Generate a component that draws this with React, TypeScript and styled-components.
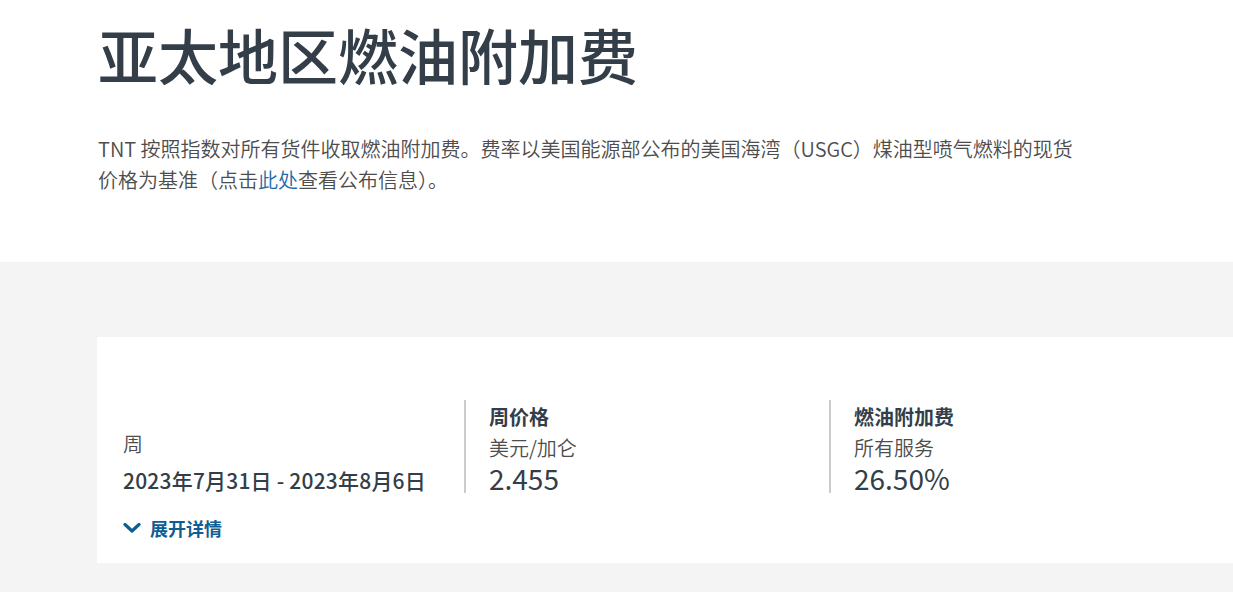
import styled, { createGlobalStyle } from 'styled-components';

const GlobalStyle = createGlobalStyle`
  html, body {
    margin: 0;
    padding: 0;
    background: #ffffff;
  }
  body {
    font-family: 'Noto Sans CJK SC', 'Noto Sans', sans-serif;
    color: #333e48;
    overflow: hidden;
  }
`;

const columns = [
  { title: '周价格', unit: '美元/加仑', value: '2.455' },
  { title: '燃油附加费', unit: '所有服务', value: '26.50%' },
];

const App = () => {
  return (
    <>
      <GlobalStyle />
      <Header>
        <Title>亚太地区燃油附加费</Title>
        <Intro>
          TNT 按照指数对所有货件收取燃油附加费。费率以美国能源部公布的美国海湾（USGC）煤油型喷气燃料的现货价格为基准（点击
          <IntroLink href="#">此处</IntroLink>查看公布信息）。
        </Intro>
      </Header>
      <GraySection>
        <Card>
          <Row>
            <WeekCol>
              <Label>周</Label>
              <DateText>2023年7月31日 - 2023年8月6日</DateText>
            </WeekCol>
            {columns.map((c) => (
              <InfoCol key={c.title}>
                <ColTitle>{c.title}</ColTitle>
                <Label>{c.unit}</Label>
                <Value>{c.value}</Value>
              </InfoCol>
            ))}
          </Row>
          <Expand>
            <svg width="18" height="12" viewBox="0 0 18 12">
              <path
                d="M2 2.5 L9 9 L16 2.5"
                fill="none"
                stroke="#0e5e93"
                strokeWidth="3.2"
                strokeLinecap="round"
                strokeLinejoin="round"
              />
            </svg>
            展开详情
          </Expand>
        </Card>
      </GraySection>
    </>
  );
};

export default App;

const Header = styled.div`
  padding: 12px 0 0 98px;
  height: 262px;
  box-sizing: border-box;
`;

const Title = styled.h1`
  margin: 0;
  font-size: 60px;
  line-height: 84px;
  font-weight: 500;
  color: #333e48;
`;

const Intro = styled.p`
  margin: 37px 0 0;
  max-width: 990px;
  font-size: 20px;
  line-height: 31px;
  font-weight: 350;
  color: #4d4d4d;
`;

const IntroLink = styled.a`
  color: #1f6aa8;
  text-decoration: none;
`;

const GraySection = styled.div`
  background: #f4f4f4;
  padding: 75px 0 29px 97px;
`;

const Card = styled.div`
  background: #ffffff;
  padding: 63px 0 24px 26px;
  height: 226px;
  box-sizing: border-box;
`;

const Row = styled.div`
  display: grid;
  grid-template-columns: 341px 365px 1fr;
  align-items: end;
`;

const WeekCol = styled.div`
  display: flex;
  flex-direction: column;
`;

const InfoCol = styled.div`
  display: flex;
  flex-direction: column;
  border-left: 2px solid #cccccc;
  padding-left: 23px;
  height: 93px;
  box-sizing: border-box;
`;

const ColTitle = styled.div`
  font-size: 20px;
  line-height: 28px;
  font-weight: 700;
  color: #333e48;
  margin-top: 3px;
`;

const Label = styled.div`
  font-size: 20px;
  line-height: 30px;
  font-weight: 350;
  color: #4d4d4d;
  margin-top: 2px;
`;

const DateText = styled.div`
  font-size: 21px;
  line-height: 30px;
  font-weight: 500;
  letter-spacing: 0.2px;
  color: #333e48;
  margin-top: 6px;
  margin-bottom: -2px;
`;

const Value = styled.div`
  font-size: 28px;
  line-height: 30px;
  font-weight: 400;
  color: #333e48;
`;

const Expand = styled.a`
  display: inline-flex;
  align-items: center;
  gap: 9px;
  margin-top: 22px;
  font-size: 18px;
  font-weight: 700;
  color: #0e5e93;
  cursor: pointer;
`;
